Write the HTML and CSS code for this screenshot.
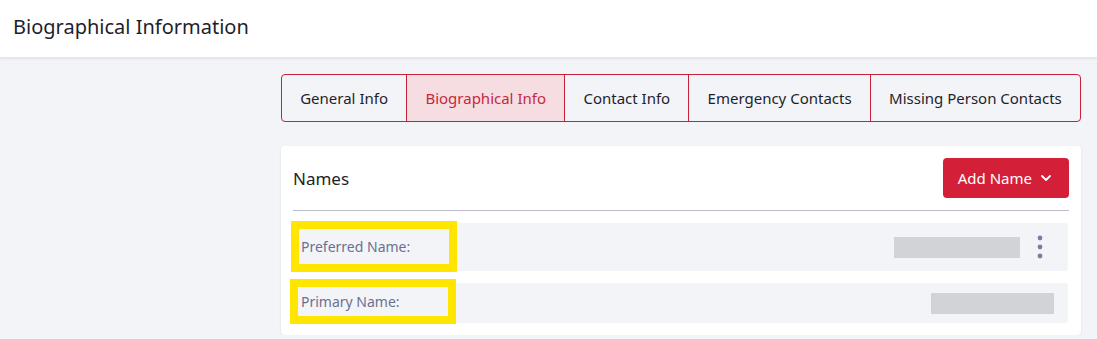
FILE: index.html
```html
<!DOCTYPE html>
<html lang="en">
<head>
    <meta charset="UTF-8">
    <meta name="viewport" content="width=device-width, initial-scale=1.0">
    <title>Biographical Information</title>
    <link rel="stylesheet" href="styles.css">
</head>
<body>
    <header class="page-header">
        <h1>Biographical Information</h1>
    </header>

    <div class="layout">
        <aside class="sidebar"></aside>

        <main class="content">
            <nav class="tabs">
                <a class="tab">General Info</a>
                <a class="tab active">Biographical Info</a>
                <a class="tab">Contact Info</a>
                <a class="tab">Emergency Contacts</a>
                <a class="tab">Missing Person Contacts</a>
            </nav>

            <section class="card">
                <div class="card-head">
                    <h2>Names</h2>
                    <button class="add-btn">
                        Add Name
                        <svg width="12" height="12" viewBox="0 0 12 12">
                            <path d="M2 4 L6 8 L10 4" fill="none" stroke="#fff" stroke-width="1.8" stroke-linecap="round" stroke-linejoin="round"/>
                        </svg>
                    </button>
                </div>

                <div class="name-row">
                    <span class="name-label marked">Preferred Name:</span>
                    <span class="name-value" style="width: 126px;"></span>
                    <button class="kebab">
                        <svg width="8" height="24" viewBox="0 0 8 24">
                            <circle cx="4" cy="3" r="2.4"/>
                            <circle cx="4" cy="12" r="2.4"/>
                            <circle cx="4" cy="21" r="2.4"/>
                        </svg>
                    </button>
                </div>

                <div class="name-row">
                    <span class="name-label marked second">Primary Name:</span>
                    <span class="name-value" style="width: 123px;"></span>
                </div>
            </section>
        </main>
    </div>
</body>
</html>
```

FILE: styles.css
```css
body {
    font-family: 'Noto Sans', 'Open Sans', sans-serif;
    background: #f3f4f8;
    color: #1d1f2b;
    margin: 0;
    padding: 0;
}
.page-header {
    background: #fff;
    display: flex;
    align-items: center;
    padding-left: 13px;
    box-shadow: 0 1px 2px rgba(0, 0, 0, 0.08);
    border-bottom: 1px solid #e4e6ec;
    box-sizing: border-box;
    height: 58px;
}
h1 {
    font-size: 20px;
    font-weight: 400;
    margin: 0;
    padding-bottom: 4px;
}
.layout {
    display: grid;
    grid-template-columns: 265px 1fr;
    padding: 16px 16px 0 16px;
}
.tabs {
    display: flex;
    border: 1px solid #c8203a;
    border-radius: 4px;
    overflow: hidden;
    height: 48px;
    box-sizing: border-box;
}
.tab {
    flex: 1 1 auto;
    display: flex;
    align-items: center;
    justify-content: center;
    font-size: 15px;
    padding: 0 16px 1px;
    color: #1d1f2b;
    border-left: 1px solid #c8203a;
    white-space: nowrap;
}
.tab:first-child {
    border-left: none;
}
.tab.active {
    background: #f5dde2;
    color: #c7283f;
}
.card {
    margin-top: 24px;
    background: #fff;
    border-radius: 4px;
    box-shadow: 0 1px 3px rgba(20, 25, 50, 0.08);
    padding: 12px 13px 12px 11px;
}
.card-head {
    display: flex;
    align-items: center;
    justify-content: space-between;
    padding-bottom: 12px;
    border-bottom: 1px solid #b9bccb;
    margin: 0 -1px 0 1px;
}
h2 {
    font-size: 17px;
    font-weight: 400;
    margin: 0;
}
.add-btn {
    display: flex;
    align-items: center;
    gap: 8px;
    height: 40px;
    padding: 0 17px 1px 15px;
    background: #d31f37;
    color: #fff;
    font-family: inherit;
    font-size: 15px;
    border: none;
    border-radius: 4px;
}
.name-row {
    display: flex;
    align-items: center;
    min-height: 40px;
    margin-top: 12px;
    padding: 0 14px 0 9px;
    background: #f3f4f8;
    border-radius: 3px;
}
.name-label {
    font-size: 14px;
    color: #6c7090;
    margin-right: auto;
}
.name-label.marked {
    align-self: stretch;
    display: flex;
    align-items: center;
    box-sizing: border-box;
    width: 166px;
    border: 8px solid #ffe500;
    margin: -2px auto -1px -10px;
    padding-left: 2px;
}
.name-label.second {
    margin: -4px auto -1px -11px;
    padding-left: 3px;
}
.name-value {
    height: 21px;
    background: #d2d3d6;
}
.kebab {
    width: 28px;
    height: 48px;
    margin-left: 6px;
    padding: 0;
    border: none;
    background: none;
    display: flex;
    align-items: center;
    justify-content: center;
    fill: #7a7fa2;
}
```
